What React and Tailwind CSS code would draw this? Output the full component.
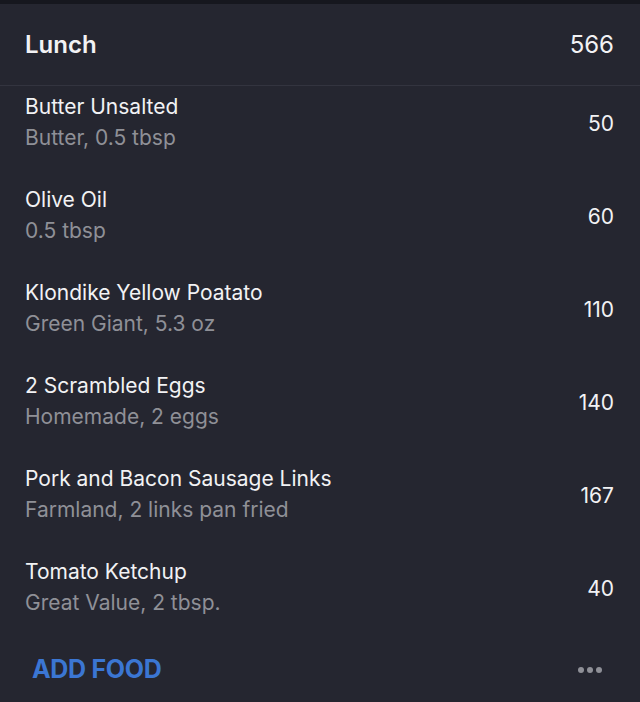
import React from 'react';

const FOODS = [
  { name: 'Butter Unsalted', detail: 'Butter, 0.5 tbsp', cal: 50 },
  { name: 'Olive Oil', detail: '0.5 tbsp', cal: 60 },
  { name: 'Klondike Yellow Poatato', detail: 'Green Giant, 5.3 oz', cal: 110 },
  { name: '2 Scrambled Eggs', detail: 'Homemade, 2 eggs', cal: 140 },
  { name: 'Pork and Bacon Sausage Links', detail: 'Farmland, 2 links pan fried', cal: 167 },
  { name: 'Tomato Ketchup', detail: 'Great Value, 2 tbsp.', cal: 40 },
];

export default function App() {
  return (
    <div className="w-[640px] h-[702px] bg-[#252630] font-['Inter','Liberation_Sans',sans-serif] overflow-hidden">
      <div className="h-[4px] bg-[#16171e]" />
      <div className="h-[82px] flex items-center justify-between pl-[25px] pr-[26px] border-b border-[#33343f]">
        <span className="text-[24px] font-semibold text-[#f2f2f4]">Lunch</span>
        <span className="text-[24px] text-[#f2f2f4]">566</span>
      </div>
      {FOODS.map((f) => (
        <div key={f.name} className="h-[93px] flex items-start justify-between pl-[25px] pr-[26px]">
          <div className="flex-1 flex items-center justify-between pt-[5px]">
            <div className="leading-[31px]">
              <div className="text-[21px] text-[#f2f2f4]">{f.name}</div>
              <div className="text-[21px] text-[#8f9097]">{f.detail}</div>
            </div>
            <div className="text-[21px] text-[#f2f2f4] pt-[4px]">{f.cal}</div>
          </div>
        </div>
      ))}
      <div className="flex items-center justify-between pl-[32px] pr-[38px] pt-[7px]">
        <span className="text-[25px] font-bold text-[#3b76d3] tracking-[-0.3px]">ADD FOOD</span>
        <span className="flex gap-[3px]">
          <span className="w-[6px] h-[6px] rounded-full bg-[#8f9097]" />
          <span className="w-[6px] h-[6px] rounded-full bg-[#8f9097]" />
          <span className="w-[6px] h-[6px] rounded-full bg-[#8f9097]" />
        </span>
      </div>
    </div>
  );
}
